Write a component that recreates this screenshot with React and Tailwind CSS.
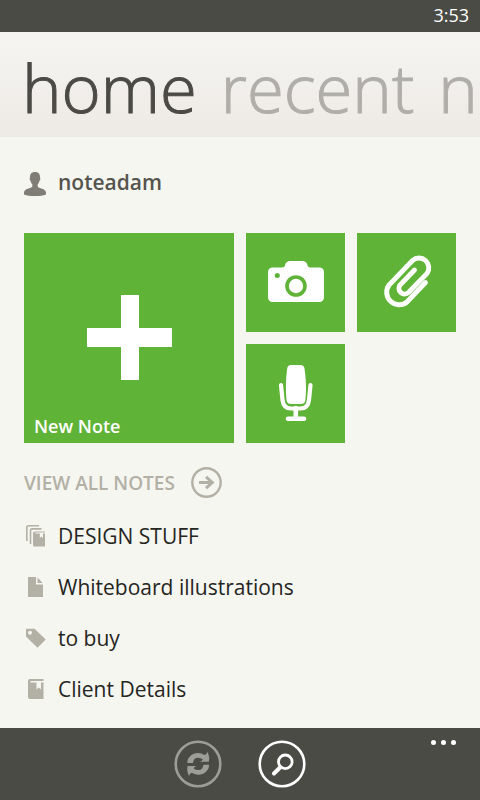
import React from "react";

const GREEN = "#5fb336";

function PersonIcon() {
  return (
    <svg viewBox="0 0 22 24" className="h-6 w-[22px] shrink-0" fill="#7f7d76" aria-hidden="true">
      <path d="M11 0C7.5 0 5.800 2.200 6 5.500C5.300 6 5.700 8.500 6.600 9C7 10.800 7.600 11.500 8.300 12.200V14.500C7.500 16.500 0 16.500 0 20.500V22.500Q4 24 11 24T22 22.500V20.500C22 16.500 14.500 16.500 13.700 14.500V12.200C14.400 11.500 15 10.800 15.400 9C16.300 8.500 16.700 6 16 5.500C16.200 2.200 14.500 0 11 0Z" />
    </svg>
  );
}

function CameraIcon() {
  return (
    <svg viewBox="0 0 99 99" className="size-full" aria-hidden="true">
      <path
        fill="#fff"
        d="M27 34.500H36Q38.600 34.500 39 32.500Q39.500 28 44.500 28H56Q61 28 61.500 32.500Q62 34.500 64.500 34.500H73Q78 34.500 78 39.500V64Q78 69 73 69H27Q22 69 22 64V39.500Q22 34.500 27 34.500Z"
      />
      <circle cx="50" cy="53" r="9" fill="none" stroke={GREEN} strokeWidth="3.600" />
      <circle cx="31.300" cy="42.500" r="2.500" fill={GREEN} />
    </svg>
  );
}

function ClipIcon() {
  return (
    <svg viewBox="0 0 99 99" className="size-full" fill="none" stroke="#fff" strokeWidth="4.900" strokeLinecap="round" aria-hidden="true">
      <path d="M68.500 49.500L50 69A12.500 12.500 0 0 1 32 52L55.500 27.500A9.800 9.800 0 0 1 70 40.500L51.500 59.500A5.700 5.700 0 0 1 43 52L57.500 37" />
    </svg>
  );
}

function MicIcon() {
  return (
    <svg viewBox="0 0 99 99" className="size-full" aria-hidden="true">
      <path fill="#fff" d="M45 21H54.500Q58 21 58.500 24.500Q61 40 59.400 56Q59 60 55 60H45Q41 60 40.500 56Q39 40 41.200 24.500Q41.500 21 45 21Z" />
      <g fill="none" stroke="#fff" strokeWidth="4.200" strokeLinecap="round">
        <path d="M35 41L36.500 56Q37.500 64.500 45 64.500H54.500Q62 64.500 63 56L64.500 41" />
        <path d="M49.800 64V74M42 74.700H58" strokeWidth="4.600" />
      </g>
    </svg>
  );
}

function PlusIcon() {
  return (
    <svg viewBox="0 0 210 210" className="size-full" fill="#fff" aria-hidden="true">
      <path d="M97 62H115V95H148V114H115V147H97V114H63V95H97Z" />
    </svg>
  );
}

function ArrowCircleIcon() {
  return (
    <svg viewBox="0 0 31 31" className="size-[31px] shrink-0" fill="none" stroke="#b3b0a5" aria-hidden="true">
      <circle cx="15.500" cy="15.500" r="14.200" strokeWidth="2.400" />
      <path d="M8 15.500H21" strokeWidth="3" />
      <path d="M15 9.800L21.300 15.500L15 21.200" strokeWidth="3" />
    </svg>
  );
}

function StackIcon() {
  return (
    <svg viewBox="0 0 22 24" className="h-6 w-[22px] shrink-0" aria-hidden="true">
      <g fill="none" stroke="#b3b0a5" strokeWidth="1.600">
        <path d="M2.800 17V3.500Q2.800 1.800 4.500 1.800H15" />
        <path d="M6.500 20V6.500Q6.500 4.900 8.200 4.900H17.500" />
      </g>
      <path fill="#b3b0a5" d="M11 7.400H21V8.600H11.500V9.500H15.800V14L17.400 12.600L19 14V9.500H21V22.500H10.500Q9 22.500 9 21V9.400Q9 7.400 11 7.400Z" />
    </svg>
  );
}

function PageIcon() {
  return (
    <svg viewBox="0 0 22 24" className="h-6 w-[22px] shrink-0" fill="#b3b0a5" aria-hidden="true">
      <path d="M4.500 2H12V9.500H19V21.500Q19 22 18.500 22H4.500Q4 22 4 21.500V2.500Q4 2 4.500 2ZM13.500 2.500L18.700 8H13.500Z" />
    </svg>
  );
}

function TagIcon() {
  return (
    <svg viewBox="0 0 22 24" className="h-6 w-[22px] shrink-0" fill="#b3b0a5" aria-hidden="true">
      <path
        fillRule="evenodd"
        d="M2.800 2.800H10.500L21.700 13.500L13.500 21.800L2 10.500V3.600Q2 2.800 2.800 2.800ZM6 4.800A2 2 0 1 0 6 8.800A2 2 0 1 0 6 4.800Z"
      />
    </svg>
  );
}

function NotebookIcon() {
  return (
    <svg viewBox="0 0 22 24" className="h-6 w-[22px] shrink-0" fill="#b3b0a5" aria-hidden="true">
      <path d="M6 2H19.500V4H6.500V5.500H12.500V12.500L14.700 10.500L17 12.500V5.500H19.500V22H6Q4 22 4 20V4Q4 2 6 2Z" />
    </svg>
  );
}

const SYNC_HALF =
  "M13.300 23C13.300 17.500 18 13 24 13Q27.500 13 30.500 15Q33 14.500 33.300 11.700Q36 16.500 34.800 21.800H25.800Q28.500 21 28.800 19.300Q26.800 17.800 24 17.800C21 17.800 19.500 19.500 19 23Z";

function SyncIcon() {
  return (
    <svg viewBox="0 0 48 48" className="size-12" fill="#9d9d98" aria-hidden="true">
      <circle cx="24" cy="24" r="22.300" fill="none" stroke="#9d9d98" strokeWidth="2.600" />
      <path d={SYNC_HALF} />
      <path transform="rotate(180 24.200 23.900)" d={SYNC_HALF} />
    </svg>
  );
}

function SearchIcon() {
  return (
    <svg viewBox="0 0 48 48" className="size-12" fill="none" stroke="#fff" aria-hidden="true">
      <circle cx="24" cy="24" r="22.300" strokeWidth="2.600" />
      <circle cx="27.300" cy="21.800" r="6.800" strokeWidth="2.800" />
      <path d="M22 27.500L16 33.500" strokeWidth="4" strokeLinecap="round" />
    </svg>
  );
}

const shortcuts = [
  { label: "DESIGN STUFF", Icon: StackIcon },
  { label: "Whiteboard illustrations", Icon: PageIcon },
  { label: "to buy", Icon: TagIcon },
  { label: "Client Details", Icon: NotebookIcon },
];

const tools = [
  { label: "Camera note", Icon: CameraIcon },
  { label: "Attach file", Icon: ClipIcon },
  { label: "Audio note", Icon: MicIcon },
];

export default function App() {
  return (
    <div className="flex min-h-screen flex-col overflow-hidden bg-[#f6f6f1] font-['Open_Sans','Noto_Sans',sans-serif] text-[#252522]">
      <div className="flex h-8 items-center justify-end bg-[#4b4b46] px-[11px] pb-0.5 text-lg leading-6 text-white">
        <time>3:53</time>
      </div>

      <header className="bg-linear-to-b from-[#f6f5f2] to-[#edeae5]">
        <nav className="flex h-[105px] items-center gap-6 overflow-hidden pt-1 pl-[22px] text-[67px] leading-[96px] font-light whitespace-nowrap text-[#b0aea9] [-webkit-text-stroke:1px]">
          <a href="#home" aria-current="page" className="text-[#4b4a45]">home</a>
          <a href="#recent">recent</a>
          <a href="#n">n</a>
        </nav>
      </header>

      <main className="flex-1 px-6 pt-[35px] pb-3">
        <div className="flex h-6 items-start gap-3 text-[21px] leading-5 font-semibold text-[#55544e]">
          <PersonIcon />
          <h1>noteadam</h1>
        </div>

        <div className="mt-[37px] grid grid-cols-4 gap-3">
          <button type="button" className="relative col-span-2 row-span-2 aspect-square bg-[#5fb336]">
            <PlusIcon />
            <span className="absolute bottom-[5px] left-[10px] text-lg leading-6 font-semibold text-white">New Note</span>
          </button>
          {tools.map(({ label, Icon }) => (
            <button key={label} type="button" aria-label={label} className="aspect-square bg-[#5fb336]">
              <Icon />
            </button>
          ))}
        </div>

        <a href="#all" className="mt-6 flex h-[31px] items-center gap-4 text-[19px] leading-6 font-semibold text-[#b3b0a5]">
          VIEW ALL NOTES
          <ArrowCircleIcon />
        </a>

        <ul className="mt-3">
          {shortcuts.map(({ label, Icon }) => (
            <li key={label}>
              <a href="#note" className="flex h-[51px] items-center gap-3 text-[21px] leading-8">
                <Icon />
                {label}
              </a>
            </li>
          ))}
        </ul>
      </main>

      <footer className="grid h-[72px] grid-cols-[1fr_auto_1fr] bg-[#4b4b46]">
        <div className="col-start-2 flex items-center gap-9">
          <button type="button" aria-label="Sync"><SyncIcon /></button>
          <button type="button" aria-label="Search"><SearchIcon /></button>
        </div>
        <button type="button" aria-label="More" className="mr-6 flex h-[29px] items-center gap-[5px] self-start justify-self-end">
          <span className="size-[5px] rounded-full bg-white" />
          <span className="size-[5px] rounded-full bg-white" />
          <span className="size-[5px] rounded-full bg-white" />
        </button>
      </footer>
    </div>
  );
}
